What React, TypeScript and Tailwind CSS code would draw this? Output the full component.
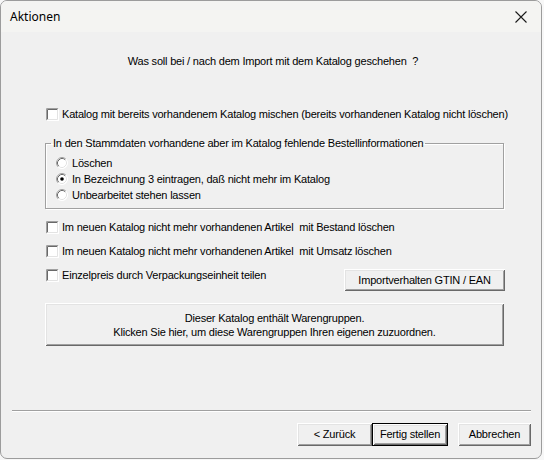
import type { ReactNode } from 'react';

const bevel =
  'shadow-[inset_1px_1px_0_#ffffff,inset_-1px_-1px_0_#696969,inset_2px_2px_0_#e3e3e3,inset_-2px_-2px_0_#a0a0a0]';

function CheckBox() {
  return (
    <svg width="13" height="13" viewBox="0 0 13 13" className="shrink-0">
      <rect x="0" y="0" width="13" height="13" fill="#ffffff" />
      <path d="M0.5 12.5 V0.5 H12.5" fill="none" stroke="#a0a0a0" />
      <path d="M1.5 11.5 V1.5 H11.5" fill="none" stroke="#696969" />
      <path d="M1.5 11.5 H11.5 V1.5" fill="none" stroke="#e3e3e3" />
      <path d="M0.5 12.5 H12.5 V0.5" fill="none" stroke="#ffffff" />
    </svg>
  );
}

function Radio({ checked }: { checked?: boolean }) {
  return (
    <svg width="12" height="12" viewBox="0 0 12 12" className="shrink-0">
      <circle cx="6" cy="6" r="5.5" fill="#ffffff" />
      <path d="M2.11 9.89 A5.5 5.5 0 0 1 9.89 2.11" fill="none" stroke="#a0a0a0" />
      <path d="M9.89 2.11 A5.5 5.5 0 0 1 2.11 9.89" fill="none" stroke="#ffffff" />
      <path d="M2.82 9.18 A4.5 4.5 0 0 1 9.18 2.82" fill="none" stroke="#696969" />
      <path d="M9.18 2.82 A4.5 4.5 0 0 1 2.82 9.18" fill="none" stroke="#e3e3e3" />
      {checked && <circle cx="6" cy="6" r="1.8" fill="#000000" />}
    </svg>
  );
}

function CheckRow({ children, className = '' }: { children: ReactNode; className?: string }) {
  return (
    <div className={`flex h-[16px] items-center gap-[3px] ${className}`}>
      <CheckBox />
      <span className="whitespace-pre">{children}</span>
    </div>
  );
}

function RadioRow({ children, checked }: { children: ReactNode; checked?: boolean }) {
  return (
    <div className="flex h-[16px] items-center gap-[4px]">
      <Radio checked={checked} />
      <span>{children}</span>
    </div>
  );
}

function Button({ children, className = '', isDefault }: { children: ReactNode; className?: string; isDefault?: boolean }) {
  return (
    <button
      className={`flex items-center justify-center bg-[#f0f0f0] tracking-[-0.2px] ${bevel} ${
        isDefault ? 'border border-black' : ''
      } ${className}`}
    >
      {children}
    </button>
  );
}

export default function App() {
  return (
    <div className="w-[544px] h-[460px] bg-[#f7f7f7] text-[11px] text-black tracking-[-0.2px] font-['Liberation_Sans',Arial,sans-serif]">
      <div className="w-[542px] h-[459px] flex flex-col border border-[#9c9c9c] rounded-[7px] overflow-hidden bg-[#f0f0f0]">
        {/* Title bar */}
        <div className="h-[31px] shrink-0 flex items-center justify-between pl-[9px] pr-[14px] bg-[#f4f4f2] font-['Noto_Sans',sans-serif] text-[12px] tracking-normal">
          <span>Aktionen</span>
          <svg width="12" height="12" viewBox="0 0 12 12">
            <path d="M0.5 0.5 L11.5 11.5 M11.5 0.5 L0.5 11.5" stroke="#1a1a1a" strokeWidth="1.1" />
          </svg>
        </div>

        {/* Body */}
        <div className="flex-1 flex flex-col">
          <div className="mt-[21px] h-[16px] flex items-center justify-center pl-[4px] whitespace-pre">
            Was soll bei / nach dem Import mit dem Katalog geschehen  ?
          </div>

          <CheckRow className="mt-[37px] ml-[45px]">
            Katalog mit bereits vorhandenem Katalog mischen (bereits vorhandenen Katalog nicht löschen)
          </CheckRow>

          <fieldset className="mt-[13px] ml-[44px] w-[459px] border border-[#a0a0a0] shadow-[1px_1px_0_#ffffff,inset_1px_1px_0_#ffffff] pl-[10px] pt-[4px] pb-[5px]">
            <legend className="-ml-[5px] px-[2px] h-[16px] leading-[16px]">
              In den Stammdaten vorhandene aber im Katalog fehlende Bestellinformationen
            </legend>
            <RadioRow>Löschen</RadioRow>
            <RadioRow checked>In Bezeichnung 3 eintragen, daß nicht mehr im Katalog</RadioRow>
            <RadioRow>Unbearbeitet stehen lassen</RadioRow>
          </fieldset>

          <CheckRow className="mt-[10px] ml-[45px]">Im neuen Katalog nicht mehr vorhandenen Artikel  mit Bestand löschen</CheckRow>
          <CheckRow className="mt-[8px] ml-[45px]">Im neuen Katalog nicht mehr vorhandenen Artikel  mit Umsatz löschen</CheckRow>

          <div className="mt-[8px] ml-[45px] mr-[36px] flex items-start justify-between">
            <CheckRow>Einzelpreis durch Verpackungseinheit teilen</CheckRow>
            <Button className="mt-[2px] w-[161px] h-[22px]">Importverhalten GTIN / EAN</Button>
          </div>

          <Button className="mt-[12px] ml-[44px] w-[459px] h-[43px] flex-col leading-[14px]">
            <span>Dieser Katalog enthält Warengruppen.</span>
            <span>Klicken Sie hier, um diese Warengruppen Ihren eigenen zuzuordnen.</span>
          </Button>

          <div className="mt-[64px] ml-[11px] w-[519px] border-t border-[#a0a0a0] border-b border-b-white" />

          <div className="mt-[11px] mr-[10px] flex justify-end">
            <Button className="w-[75px] h-[23px]">&lt; Zurück</Button>
            <Button isDefault className="w-[76px] h-[23px]">Fertig stellen</Button>
            <Button className="ml-[10px] w-[73px] h-[23px]">Abbrechen</Button>
          </div>
        </div>
      </div>
    </div>
  );
}
